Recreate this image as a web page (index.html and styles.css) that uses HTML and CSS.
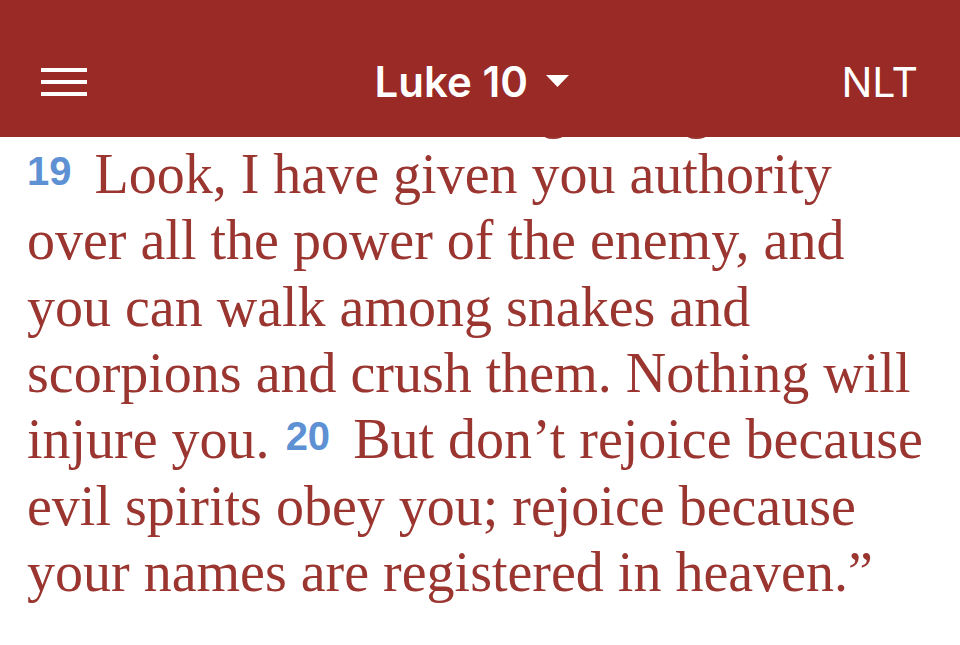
FILE: index.html
```html
<!DOCTYPE html>
<html lang="en">
<head>
<meta charset="utf-8">
<title>Luke 10 NLT</title>
<link rel="stylesheet" href="styles.css">
</head>
<body>
<header class="topbar">
  <button class="menu" aria-label="Menu">
    <svg width="46" height="28" viewBox="0 0 46 28"><rect x="0" y="0" width="46" height="4" fill="#fff"/><rect x="0" y="12" width="46" height="4" fill="#fff"/><rect x="0" y="24" width="46" height="4" fill="#fff"/></svg>
  </button>
  <div class="title">Luke 10 <svg class="caret" width="23" height="12" viewBox="0 0 23 12"><path d="M0 0 L23 0 L11.5 12 Z" fill="#fff"/></svg></div>
  <div class="version">NLT</div>
</header>
<main class="reader">
  <p class="verses">fall from heaven like lightning! <span class="vn">19</span>&nbsp;Look, I have given you authority over all the power of the enemy, and you can walk among snakes and scorpions and crush them. Nothing will injure you. <span class="vn vn-mid">20</span>&nbsp;But don’t rejoice because evil spirits obey you; rejoice because your names are registered in heaven.”</p>
</main>
</body>
</html>
```
FILE: styles.css
```css
* { box-sizing: border-box; }
html, body { margin: 0; padding: 0; background: #fff; }
body { width: 960px; height: 645px; overflow: hidden; }

.topbar {
  position: fixed;
  top: 0; left: 0; right: 0;
  height: 137px;
  background: #992a26;
  color: #fff;
  display: flex;
  align-items: center;
  justify-content: space-between;
  padding: 26px 42px 0 41px;
  font-family: Inter, "Liberation Sans", sans-serif;
  z-index: 2;
}
.menu {
  background: none;
  border: 0;
  padding: 0;
  width: 46px;
  height: 28px;
  display: flex;
}
.title {
  display: flex;
  align-items: center;
  gap: 18px;
  font-size: 42px;
  font-weight: 600;
  margin-left: 15px;
}
.caret { display: block; margin-top: -1px; }
.version {
  font-size: 41px;
  font-weight: 400;
}

.reader {
  padding: 74.67px 27px 0 27px;
}
.verses {
  margin: 0;
  font-family: "Liberation Serif", "Times New Roman", serif;
  font-size: 56px;
  line-height: 66.33px;
  color: #9a3530;
}
.vn {
  font-family: "Liberation Sans", Arial, sans-serif;
  font-weight: 700;
  font-size: 40px;
  line-height: 1;
  color: #5d91d3;
  vertical-align: 8px;
  margin-right: 9px;
}
.vn-mid { margin-left: 2px; }
```
